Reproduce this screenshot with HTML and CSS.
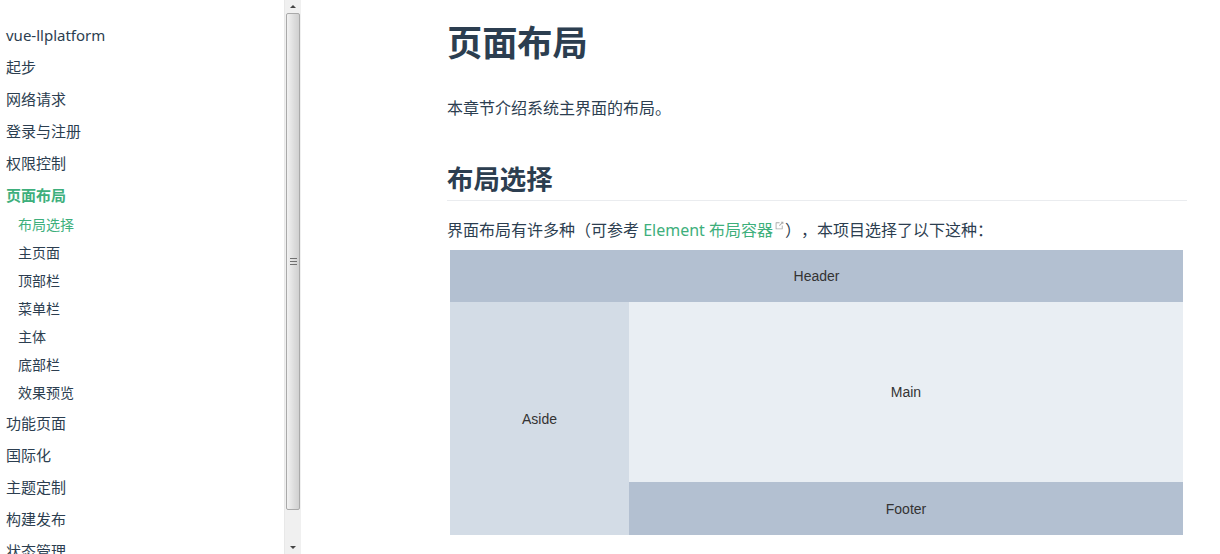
FILE: index.html
```html
<!DOCTYPE html>
<html lang="zh-CN">
<head>
<meta charset="utf-8">
<title>页面布局</title>
<link rel="stylesheet" href="styles.css">
</head>
<body>
<div class="page">
  <aside class="sidebar">
    <nav class="nav">
      <a class="item">vue-llplatform</a>
      <a class="item">起步</a>
      <a class="item">网络请求</a>
      <a class="item">登录与注册</a>
      <a class="item">权限控制</a>
      <a class="item active">页面布局</a>
      <a class="sub active">布局选择</a>
      <a class="sub">主页面</a>
      <a class="sub">顶部栏</a>
      <a class="sub">菜单栏</a>
      <a class="sub">主体</a>
      <a class="sub">底部栏</a>
      <a class="sub">效果预览</a>
      <a class="item">功能页面</a>
      <a class="item">国际化</a>
      <a class="item">主题定制</a>
      <a class="item">构建发布</a>
      <a class="item">状态管理</a>
    </nav>
    <div class="scrollbar">
      <div class="arrow"><span class="tri up"></span></div>
      <div class="thumb"><span class="grip"></span></div>
      <div class="track"></div>
      <div class="arrow"><span class="tri down"></span></div>
    </div>
  </aside>
  <main class="main">
    <div class="content">
      <h1 class="title">页面布局</h1>
      <p class="para intro">本章节介绍系统主界面的布局。</p>
      <h2 class="heading">布局选择</h2>
      <p class="para lead">界面布局有许多种（可参考 <a class="link">Element 布局容器<svg class="ext" viewBox="0 0 100 100" width="11" height="11"><path fill="currentColor" d="M18.8,85.1h56l0,0c2.2,0,4-1.8,4-4v-32h-8v28h-48v-48h28v-8h-32l0,0c-2.2,0-4,1.8-4,4v56C14.8,83.3,16.6,85.1,18.8,85.1z"/><polygon fill="currentColor" points="45.7,48.7 51.3,54.3 77.2,28.5 77.2,37.2 85.2,37.2 85.2,14.9 62.8,14.9 62.8,22.9 71.5,22.9"/></svg></a>），本项目选择了以下这种：</p>
      <div class="demo">
        <div class="d-header">Header</div>
        <div class="d-body">
          <div class="d-aside">Aside</div>
          <div class="d-right">
            <div class="d-main">Main</div>
            <div class="d-footer">Footer</div>
          </div>
        </div>
      </div>
    </div>
  </main>
</div>
</body>
</html>
```

FILE: styles.css
```css
html, body {
  margin: 0;
  padding: 0;
  background: #fff;
  height: 100%;
  overflow: hidden;
}
body {
  font-family: "Noto Sans", "Noto Sans CJK SC", sans-serif;
  color: #2c3e50;
  text-spacing-trim: space-all;
}
.page {
  display: flex;
  height: 554px;
}
.sidebar {
  display: flex;
  width: 301px;
  flex: none;
  height: 554px;
}
.nav {
  flex: 1;
  display: flex;
  flex-direction: column;
  padding-top: 19px;
  overflow: hidden;
}
.item {
  display: block;
  height: 32px;
  line-height: 32px;
  font-size: 15px;
  padding-left: 6px;
  color: #2c3e50;
  white-space: nowrap;
  flex: none;
}
.item.active {
  color: #3eaf7c;
  font-weight: 700;
}
.sub {
  display: block;
  height: 28px;
  line-height: 28px;
  font-size: 14px;
  padding-left: 18px;
  color: #2c3e50;
  flex: none;
}
.sub.active {
  color: #3eaf7c;
}
.scrollbar {
  width: 17px;
  flex: none;
  display: flex;
  flex-direction: column;
  background: #f0f0f0;
  border-left: 1px solid #e8e8e8;
  box-sizing: border-box;
}
.arrow {
  height: 13px;
  flex: none;
  display: flex;
  align-items: center;
  justify-content: center;
}
.tri {
  width: 0;
  height: 0;
  border-left: 3px solid transparent;
  border-right: 3px solid transparent;
}
.tri.up { border-bottom: 3px solid #444; }
.tri.down { border-top: 3px solid #444; }
.thumb {
  height: 495px;
  flex: none;
  margin: 0 1px;
  border: 1px solid #a9a9a9;
  border-radius: 2px;
  background: linear-gradient(to right, #f2f2f2, #dcdcdc 60%, #d0d0d0);
  display: flex;
  align-items: center;
  justify-content: center;
}
.grip {
  width: 7px;
  height: 7px;
  background: repeating-linear-gradient(to bottom, #707070 0, #707070 1px, transparent 1px, transparent 3px);
}
.track {
  flex: 1;
}
.main {
  flex: 1;
  padding-left: 146px;
  padding-top: 20px;
}
.content {
  width: 740px;
}
.title {
  margin: 0;
  font-size: 35.2px;
  line-height: 44px;
  font-weight: 700;
  color: #2c3e50;
}
.para {
  margin: 0;
  font-size: 16px;
  line-height: 27px;
}
.intro {
  margin-top: 31px;
}
.heading {
  margin: 41px 0 0;
  font-size: 26.4px;
  line-height: 33px;
  font-weight: 700;
  padding-bottom: 4px;
  border-bottom: 1px solid #eaecef;
}
.lead {
  margin-top: 16px;
}
.link {
  color: #3eaf7c;
}
.ext {
  color: #aaa;
  vertical-align: 5px;
  margin-left: 1px;
}
.demo {
  margin: 6px 4px 0 3px;
  font-family: "Liberation Sans", Arial, sans-serif;
  font-size: 14px;
  color: #333;
}
.d-header {
  background: #b3c0d1;
  height: 52px;
  line-height: 52px;
  text-align: center;
}
.d-body {
  display: flex;
}
.d-aside {
  width: 179px;
  flex: none;
  background: #d3dce6;
  display: flex;
  align-items: center;
  justify-content: center;
}
.d-right {
  flex: 1;
  display: flex;
  flex-direction: column;
}
.d-main {
  height: 180px;
  background: #e9eef3;
  display: flex;
  align-items: center;
  justify-content: center;
}
.d-footer {
  height: 53px;
  background: #b3c0d1;
  display: flex;
  align-items: center;
  justify-content: center;
}
```
